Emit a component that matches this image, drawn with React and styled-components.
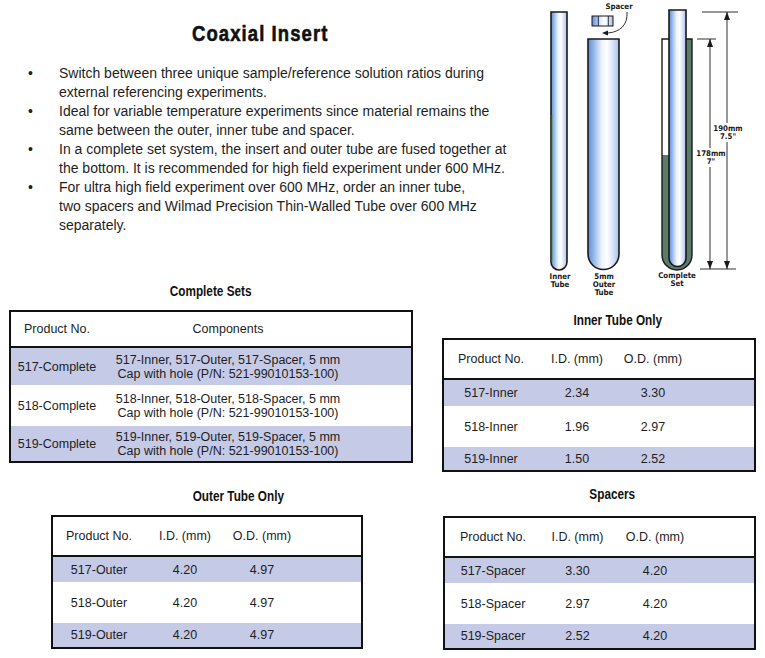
import React from "react";
import styled, { createGlobalStyle } from "styled-components";

const GlobalStyle = createGlobalStyle`
    body {
        margin: 0;
        background: #fff;
    }
`;

const completeRows = [
    ["517-Complete", "517-Inner, 517-Outer, 517-Spacer, 5 mm", "Cap with hole (P/N: 521-99010153-100)"],
    ["518-Complete", "518-Inner, 518-Outer, 518-Spacer, 5 mm", "Cap with hole (P/N: 521-99010153-100)"],
    ["519-Complete", "519-Inner, 519-Outer, 519-Spacer, 5 mm", "Cap with hole (P/N: 521-99010153-100)"],
];

const innerRows = [
    ["517-Inner", "2.34", "3.30"],
    ["518-Inner", "1.96", "2.97"],
    ["519-Inner", "1.50", "2.52"],
];

const outerRows = [
    ["517-Outer", "4.20", "4.97"],
    ["518-Outer", "4.20", "4.97"],
    ["519-Outer", "4.20", "4.97"],
];

const spacerRows = [
    ["517-Spacer", "3.30", "4.20"],
    ["518-Spacer", "2.97", "4.20"],
    ["519-Spacer", "2.52", "4.20"],
];

function TubeDiagram() {
    return (
        <Diagram width="225" height="300" viewBox="0 0 225 300">
            <defs>
                <linearGradient id="glass" x1="0" x2="1" y1="0" y2="0">
                    <stop offset="0" stopColor="#5d8dd5" />
                    <stop offset="0.18" stopColor="#94b6e8" />
                    <stop offset="0.45" stopColor="#eef4fc" />
                    <stop offset="0.62" stopColor="#ffffff" />
                    <stop offset="0.85" stopColor="#cddcf4" />
                    <stop offset="1" stopColor="#a3bfe9" />
                </linearGradient>
            </defs>

            {/* inner tube */}
            <path d="M11 12 H27 V262 A8 8 0 0 1 11 262 Z" fill="url(#glass)" stroke="#1a1a1a" strokeWidth="1.6" />
            <line x1="12.2" y1="115" x2="12.2" y2="262" stroke="#5fa06f" strokeWidth="0.9" />

            {/* spacer + callout */}
            <rect x="52" y="16" width="21" height="10" fill="url(#glass)" stroke="#1a1a1a" strokeWidth="1" />
            <line x1="58.3" y1="16" x2="58.3" y2="26" stroke="#1a1a1a" strokeWidth="0.9" />
            <line x1="68.3" y1="16" x2="68.3" y2="26" stroke="#1a1a1a" strokeWidth="0.9" />
            <path d="M87 12 C88 25 80 32 68 33" fill="none" stroke="#1a1a1a" strokeWidth="0.9" />
            <polygon points="62,33 68,30.6 68,35.4" fill="#1a1a1a" />
            <Label x="79" y="9">Spacer</Label>

            {/* 5mm outer tube */}
            <path d="M48 39 H79 V254 A15.5 15.5 0 0 1 48 254 Z" fill="url(#glass)" stroke="#1a1a1a" strokeWidth="1.6" />

            {/* complete set */}
            <path d="M122 39 H152 V255 A15 15 0 0 1 122 255 Z" fill="#fff" />
            <path
                d="M122 155 V255 A15 15 0 0 0 152 255 V39 H146 V258 A8.5 8.5 0 0 1 129 258 V155 Z"
                fill="#5b7c6a"
            />
            <path d="M122 39 H152 V255 A15 15 0 0 1 122 255 Z" fill="none" stroke="#1a1a1a" strokeWidth="1.4" />
            <path d="M129 10 H146 V258 A8.5 8.5 0 0 1 129 258 Z" fill="url(#glass)" stroke="#1a1a1a" strokeWidth="1.6" />

            {/* dimensions */}
            <g stroke="#1a1a1a" strokeWidth="0.9">
                <line x1="162" y1="12" x2="198" y2="12" />
                <line x1="157" y1="39" x2="176" y2="39" />
                <line x1="160" y1="269" x2="196" y2="269" />
                <line x1="187" y1="12" x2="187" y2="123" />
                <line x1="187" y1="142" x2="187" y2="269" />
                <line x1="170" y1="39" x2="170" y2="148" />
                <line x1="170" y1="167" x2="170" y2="269" />
            </g>
            <g fill="#1a1a1a">
                <polygon points="187,12 184,20 190,20" />
                <polygon points="187,269 184,261 190,261" />
                <polygon points="170,39 167,47 173,47" />
                <polygon points="170,269 167,261 173,261" />
            </g>
            <Label x="188" y="131">190mm</Label>
            <Label x="188" y="139">7.5"</Label>
            <Label x="171" y="156">178mm</Label>
            <Label x="171" y="164">7"</Label>

            {/* captions */}
            <Label x="20" y="279">Inner</Label>
            <Label x="20" y="287">Tube</Label>
            <Label x="64" y="279">5mm</Label>
            <Label x="64" y="287">Outer</Label>
            <Label x="64" y="295">Tube</Label>
            <Label x="137" y="278">Complete</Label>
            <Label x="137" y="286">Set</Label>
        </Diagram>
    );
}

function SpecTable({ width, cols, heights, header, rows }) {
    return (
        <Table $w={width}>
            <HeaderRow $cols={cols} $h={heights[0]}>
                {header.map((h) => (
                    <Cell key={h}>{h}</Cell>
                ))}
            </HeaderRow>
            {rows.map((r, i) => (
                <Row key={r[0]} $cols={cols} $h={heights[i + 1]} $shade={i !== 1}>
                    {r.map((c, j) => (
                        <Cell key={j}>{c}</Cell>
                    ))}
                </Row>
            ))}
        </Table>
    );
}

export default function App() {
    return (
        <Page>
            <GlobalStyle />
            <Top>
                <Intro>
                    <Title>
                        <Condensed>Coaxial Insert</Condensed>
                    </Title>
                    <Bullets>
                        <Bullet>
                            Switch between three unique sample/reference solution ratios during
                            <br />
                            external referencing experiments.
                        </Bullet>
                        <Bullet>
                            Ideal for variable temperature experiments since material remains the
                            <br />
                            same between the outer, inner tube and spacer.
                        </Bullet>
                        <Bullet>
                            In a complete set system, the insert and outer tube are fused together at
                            <br />
                            the bottom. It is recommended for high field experiment under 600 MHz.
                        </Bullet>
                        <Bullet>
                            For ultra high field experiment over 600 MHz, order an inner tube,
                            <br />
                            two spacers and Wilmad Precision Thin-Walled Tube over 600 MHz
                            <br />
                            separately.
                        </Bullet>
                    </Bullets>
                </Intro>
                <TubeDiagram />
            </Top>

            <Bottom>
                <LeftCol>
                    <SectionTitle $top={0} $shift={-18}>
                        <Condensed>Complete Sets</Condensed>
                    </SectionTitle>
                    <Table $w={404}>
                        <HeaderRow $cols="92px 250px 1fr" $h={34}>
                            <Cell>Product No.</Cell>
                            <Cell>Components</Cell>
                        </HeaderRow>
                        {completeRows.map((r, i) => (
                            <Row key={r[0]} $cols="92px 250px 1fr" $h={[37, 41, 35][i]} $shade={i !== 1}>
                                <Cell>{r[0]}</Cell>
                                <Cell>
                                    {r[1]}
                                    <br />
                                    {r[2]}
                                </Cell>
                            </Row>
                        ))}
                    </Table>

                    <Indent $left={42}>
                        <SectionTitle $top={24} $shift={-4}>
                            <Condensed>Outer Tube Only</Condensed>
                        </SectionTitle>
                        <SpecTable
                            width={312}
                            cols="92px 80px 74px 1fr"
                            heights={[38, 25, 41, 24]}
                            header={["Product No.", "I.D. (mm)", "O.D. (mm)"]}
                            rows={outerRows}
                        />
                    </Indent>
                </LeftCol>

                <RightCol>
                    <Indent $left={12}>
                        <SectionTitle $top={29} $shift={28} $gap={9}>
                            <Condensed>Inner Tube Only</Condensed>
                        </SectionTitle>
                        <SpecTable
                            width={314}
                            cols="94px 78px 74px 1fr"
                            heights={[38, 26, 41, 23]}
                            header={["Product No.", "I.D. (mm)", "O.D. (mm)"]}
                            rows={innerRows}
                        />
                    </Indent>
                    <Indent $left={13}>
                        <SectionTitle $top={13} $shift={16} $gap={13}>
                            <Condensed>Spacers</Condensed>
                        </SectionTitle>
                        <SpecTable
                            width={313}
                            cols="96px 73px 82px 1fr"
                            heights={[38, 25, 41, 24]}
                            header={["Product No.", "I.D. (mm)", "O.D. (mm)"]}
                            rows={spacerRows}
                        />
                    </Indent>
                </RightCol>
            </Bottom>
        </Page>
    );
}

const Page = styled.div`
    width: 765px;
    height: 658px;
    background: #fff;
    color: #1e1e1e;
    font-family: "Liberation Sans", Arial, sans-serif;
    overflow: hidden;
`;

const Top = styled.section`
    display: flex;
    align-items: flex-start;
    height: 282px;
`;

const Intro = styled.div`
    flex: none;
    width: 520px;
`;

// no narrow face installed, so squeeze the bold sans horizontally
const Condensed = styled.span`
    display: inline-block;
    transform: scaleX(0.84);
    transform-origin: center;
`;

const Title = styled.h1`
    margin: 0;
    padding-top: 21px;
    text-align: center;
    font-family: "Liberation Sans", Arial, sans-serif;
    font-weight: 700;
    font-size: 22px;
    line-height: 26px;
    letter-spacing: 1.3px;
    color: #111;
    -webkit-text-stroke: 0.6px #111;
`;

const Bullets = styled.ul`
    list-style: none;
    margin: 17px 0 0;
    padding: 0;
`;

const Bullet = styled.li`
    position: relative;
    padding-left: 59px;
    font-size: 14px;
    line-height: 19px;
    white-space: nowrap;

    &::before {
        content: "•";
        position: absolute;
        left: 28px;
        top: 0;
    }
`;

const Diagram = styled.svg`
    flex: none;
    margin-left: 20px;
    overflow: visible;
`;

const Label = styled.text`
    font-family: "DejaVu Sans Condensed", "Liberation Sans", sans-serif;
    font-weight: 700;
    font-size: 7.8px;
    text-anchor: middle;
    fill: #1a1a1a;
`;

const Bottom = styled.section`
    display: flex;
`;

const LeftCol = styled.div`
    flex: none;
    width: 430px;
    padding-left: 9px;
    box-sizing: border-box;
    display: flex;
    flex-direction: column;
`;

const RightCol = styled.div`
    flex: none;
    width: 335px;
    display: flex;
    flex-direction: column;
`;

const Indent = styled.div`
    margin-left: ${(p) => p.$left}px;
`;

const SectionTitle = styled.h2`
    margin: ${(p) => p.$top}px 0 ${(p) => p.$gap ?? 10}px;
    padding-left: ${(p) => Math.max(p.$shift, 0)}px;
    padding-right: ${(p) => Math.max(-p.$shift, 0)}px;
    text-align: center;
    font-family: "Liberation Sans", Arial, sans-serif;
    font-weight: 700;
    font-size: 14px;
    line-height: 18px;
    color: #111;
`;

const Table = styled.div`
    width: ${(p) => p.$w}px;
    box-sizing: border-box;
    border: 2px solid #111;
`;

const Row = styled.div`
    display: grid;
    grid-template-columns: ${(p) => p.$cols};
    align-items: center;
    height: ${(p) => p.$h}px;
    background: ${(p) => (p.$shade ? "#c5cae6" : "#fff")};
`;

const HeaderRow = styled(Row)`
    background: #fff;
    border-bottom: 2px solid #111;
`;

const Cell = styled.div`
    text-align: center;
    font-size: 12.5px;
    line-height: 14px;
    white-space: nowrap;
`;
